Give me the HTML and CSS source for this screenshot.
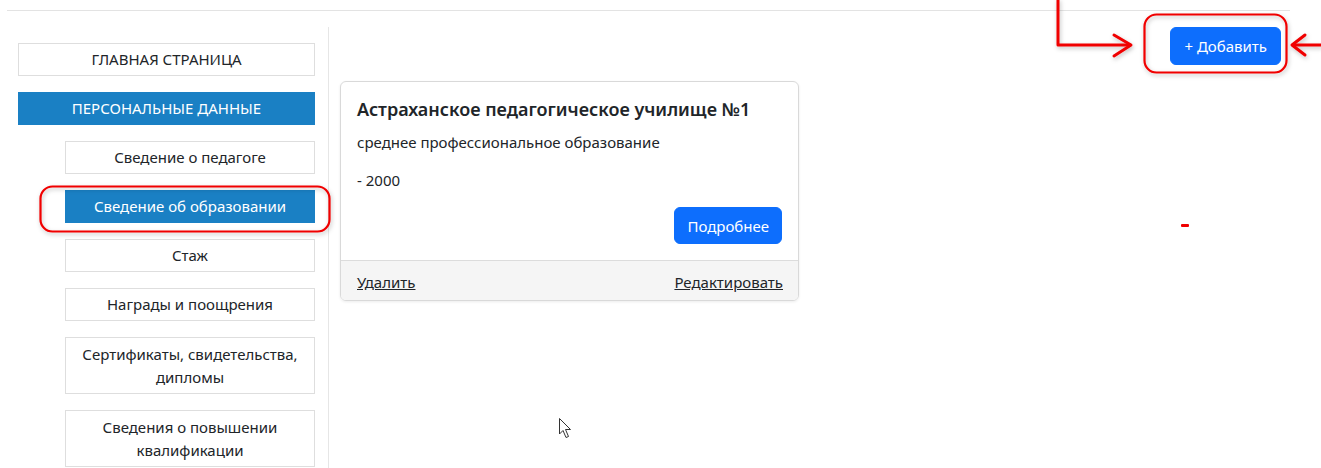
FILE: index.html
```html
<!DOCTYPE html>
<html lang="ru">
<head>
<meta charset="utf-8">
<title>Сведение об образовании</title>
<link rel="stylesheet" href="styles.css">
</head>
<body>
<div class="page">
  <div class="topbar"></div>
  <div class="layout">
    <nav class="sidebar">
      <a class="nav-item" href="#">ГЛАВНАЯ СТРАНИЦА</a>
      <a class="nav-item active" href="#">ПЕРСОНАЛЬНЫЕ ДАННЫЕ</a>
      <a class="nav-item sub" href="#">Сведение о педагоге</a>
      <a class="nav-item sub active" href="#">Сведение об образовании</a>
      <a class="nav-item sub" href="#">Стаж</a>
      <a class="nav-item sub" href="#">Награды и поощрения</a>
      <a class="nav-item sub tall" href="#">Сертификаты, свидетельства, дипломы</a>
      <a class="nav-item sub tall" href="#">Сведения о повышении квалификации</a>
    </nav>
    <main class="content">
      <div class="toolbar">
        <button class="btn btn-primary btn-add">+ Добавить</button>
      </div>
      <div class="card">
        <div class="card-body">
          <h5 class="card-title">Астраханское педагогическое училище №1</h5>
          <p class="card-text">среднее профессиональное образование</p>
          <p class="card-text">- 2000</p>
          <div class="card-actions">
            <button class="btn btn-primary">Подробнее</button>
          </div>
        </div>
        <div class="card-footer">
          <a href="#">Удалить</a>
          <a href="#">Редактировать</a>
        </div>
      </div>
    </main>
  </div>
</div>

<!-- pen marks drawn on top of the page -->
<svg class="marks" width="1321" height="468" viewBox="0 0 1321 468">
  <defs>
    <filter id="soft" x="-10%" y="-10%" width="120%" height="130%">
      <feDropShadow dx="1" dy="2" stdDeviation="2" flood-color="#000" flood-opacity="0.25"/>
    </filter>
  </defs>
  <g fill="none" stroke="#f00000" stroke-linecap="round" stroke-linejoin="round" filter="url(#soft)">
    <rect x="40.5" y="186.5" width="289" height="45" rx="12" stroke-width="2.2"/>
    <rect x="1144.5" y="14.5" width="142" height="58" rx="12" stroke-width="2.2"/>
    <path d="M1058 0 V45 H1130" stroke-width="3"/>
    <path d="M1114 35 L1131 45 L1114 56" stroke-width="3"/>
    <path d="M1321 45 H1293" stroke-width="3"/>
    <path d="M1305 35 L1292 45 L1305 55" stroke-width="3"/>
  </g>
  <rect x="1181" y="224" width="8" height="3" rx="1" fill="#f00000"/>
  <path d="M559.5 418.5 V434 L563 430.5 L566 437.5 L568.5 436.5 L565.5 429.5 L570.5 429.5 Z" fill="#fff" stroke="#333" stroke-width="1" stroke-linejoin="round"/>
</svg>
</body>
</html>
```

FILE: styles.css
```css
* { box-sizing: border-box; }

html, body {
  margin: 0;
  background: #fff;
}

body {
  font-family: "Noto Sans", "Open Sans", sans-serif;
  color: #212529;
  font-size: 15px;
}

.page {
  width: 1321px;
  height: 468px;
  overflow: hidden;
  position: relative;
}

.topbar {
  margin: 0 31px 0 7px;
  height: 11px;
  border-bottom: 1px solid #e3e3e3;
}

.layout {
  display: flex;
  margin-top: 16px;
  margin-right: 40px;
}

/* left navigation column */
.sidebar {
  width: 329px;
  flex: none;
  border-right: 1px solid #e6e6e6;
  padding: 16px 13px 0 18px;
  display: flex;
  flex-direction: column;
  gap: 16px;
  height: 460px;
}

.nav-item {
  flex: none;
  display: flex;
  align-items: center;
  justify-content: center;
  text-align: center;
  height: 33px;
  padding: 0 10px;
  border: 1px solid #dedede;
  color: #212529;
  text-decoration: none;
  font-size: 15px;
  line-height: 23px;
}

.nav-item.tall {
  height: 57px;
}

.nav-item.sub {
  margin-left: 47px;
}

.nav-item.active {
  background: #1a80c4;
  border-color: #1a80c4;
  color: #fff;
}

/* main column */
.content {
  flex: 1;
  padding: 0 0 0 11px;
}

.toolbar {
  display: flex;
  justify-content: flex-end;
}

.btn {
  font-family: inherit;
  font-size: 15px;
  line-height: 22px;
  border: 1px solid transparent;
  border-radius: 6px;
  padding: 7px 12px;
  cursor: pointer;
}

.btn-primary {
  background: #0d6efd;
  border-color: #0d6efd;
  color: #fff;
}

.btn-add {
  height: 38px;
  padding: 0 13px;
}

.card {
  margin-top: 16px;
  width: 459px;
  border: 1px solid #d9d9d9;
  border-radius: 6px;
  box-shadow: 0 1px 3px rgba(0, 0, 0, 0.08);
  overflow: hidden;
}

.card-body {
  padding: 16px;
}

.card-title {
  margin: 0 0 11px;
  font-size: 18px;
  font-weight: 600;
  line-height: 22px;
}

.card-text {
  margin: 0 0 16px;
  line-height: 22px;
}

.card-actions {
  display: flex;
  justify-content: flex-end;
}

.card-actions .btn {
  height: 37px;
  padding: 0 12px;
}

.card-footer {
  display: flex;
  justify-content: space-between;
  padding: 10px 15px 7px 16px;
  background: #f5f5f5;
  border-top: 1px solid #dcdcdc;
  line-height: 22px;
}

.card-footer a {
  color: #212529;
  text-decoration: underline;
}

.marks {
  position: absolute;
  left: 0;
  top: 0;
  pointer-events: none;
}
```
